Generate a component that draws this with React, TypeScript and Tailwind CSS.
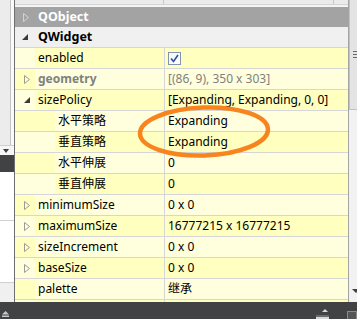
import React from "react";

type Row = {
  name: string;
  value?: string;
  level?: number;
  tri?: "open" | "closed";
  muted?: boolean;
  check?: boolean;
};

const rows: Row[] = [
  { name: "enabled", check: true },
  { name: "geometry", value: "[(86, 9), 350 x 303]", tri: "closed", muted: true },
  { name: "sizePolicy", value: "[Expanding, Expanding, 0, 0]", tri: "open" },
  { name: "水平策略", value: "Expanding", level: 1 },
  { name: "垂直策略", value: "Expanding", level: 1 },
  { name: "水平伸展", value: "0", level: 1 },
  { name: "垂直伸展", value: "0", level: 1 },
  { name: "minimumSize", value: "0 x 0", tri: "closed" },
  { name: "maximumSize", value: "16777215 x 16777215", tri: "closed" },
  { name: "sizeIncrement", value: "0 x 0", tri: "closed" },
  { name: "baseSize", value: "0 x 0", tri: "closed" },
  { name: "palette", value: "继承" },
];

const DARK = "bg-[#ffffbf]";
const LIGHT = "bg-[#ffffdd]";

function TriClosed({ color = "#9a9a9a" }: { color?: string }) {
  return (
    <svg width="6" height="9" viewBox="0 0 6 9" className="block">
      <polygon points="0.5,0.5 5.5,4.5 0.5,8.5" fill="none" stroke={color} strokeWidth="1" />
    </svg>
  );
}

function TriOpen() {
  return (
    <svg width="6" height="6" viewBox="0 0 6 6" className="block">
      <polygon points="6,0 6,6 0,6" fill="#3a3a3a" />
    </svg>
  );
}

function Check() {
  return (
    <div className="w-[13px] h-[13px] border border-[#8394b0] bg-gradient-to-br from-[#f4f6fa] to-white flex items-center justify-center">
      <svg width="9" height="9" viewBox="0 0 9 9">
        <path d="M1 4.5 L3.5 7.5 L8 1" fill="none" stroke="#2a4f9f" strokeWidth="1.6" />
      </svg>
    </div>
  );
}

function PropRow({ row, idx }: { row: Row; idx: number }) {
  const dark = idx % 2 === 0;
  const bg = dark ? DARK : LIGHT;
  const alt = dark ? LIGHT : DARK;
  const sub = row.level === 1;
  return (
    <div className={`flex h-[21px] shrink-0 border-b border-[#d6d6d6] ${bg}`}>
      <div className="flex w-[149px] shrink-0">
        <div className={`${sub ? "w-[40px]" : "w-[20px]"} shrink-0 flex items-center pl-[9px] ${alt}`}>
          {row.tri === "closed" && <TriClosed />}
          {row.tri === "open" && <TriOpen />}
        </div>
        <div
          className={`pl-[3px] flex items-center whitespace-nowrap ${
            row.muted ? "font-bold text-[#808080]" : "text-black"
          }`}
        >
          {row.name}
        </div>
      </div>
      <div className="w-px shrink-0 bg-[#d6d6d6]" />
      <div className={`flex-1 flex items-center pl-[3px] whitespace-nowrap overflow-hidden ${row.muted ? "text-[#808080]" : "text-black"}`}>
        {row.check ? <Check /> : row.value}
      </div>
    </div>
  );
}

export default function App() {
  return (
    <div
      className="relative w-[357px] h-[319px] overflow-hidden flex flex-col bg-[#f0f0f0] text-[12px] leading-none"
      style={{ fontFamily: '"Noto Sans", "Noto Sans CJK SC", sans-serif' }}
    >
      <div className="flex h-[302px] shrink-0">
        {/* left strip */}
        <div className="w-[14px] shrink-0 flex flex-col">
          <div className="h-[145px] flex">
            <div className="w-[10px] bg-[#ececec]" />
            <div className="w-px bg-[#c4c4c4]" />
            <div className="flex-1 bg-[#fafafa]" />
          </div>
          <div className="h-[10px] bg-[#f6f6f6] border-t border-[#d0d0d0] flex items-center pl-[3px]">
            <svg width="6" height="4" viewBox="0 0 6 4" className="block">
              <polygon points="0,0 6,0 3,4" fill="#404040" />
            </svg>
          </div>
          <div className="h-[17px] bg-[#404244]" />
          <div className="h-[49px] bg-white border-b border-[#d0d0d0]" />
          <div className="h-[62px] bg-white border-b border-[#d0d0d0]" />
          <div className="flex-1 bg-[#f0f0f0]" />
        </div>
        <div className="w-px shrink-0 bg-[#6e6e6e]" />

        {/* property editor */}
        <div className="flex-1 flex flex-col overflow-hidden">
          <div className="h-[5px] shrink-0 flex bg-[#ebebeb] border-b border-[#d4d4d4]">
            <div className="w-[148px]" />
            <div className="w-px bg-[#c8c8c8]" />
            <div className="w-[169px]" />
            <div className="w-px bg-[#c8c8c8]" />
          </div>
          <div className="h-[2px] shrink-0 bg-[#f4f4f4]" />
          <div className="h-[20px] shrink-0 flex items-center bg-[#a3a3a3]">
            <div className="w-[20px] shrink-0 pl-[8px] flex items-center">
              <TriClosed color="#d4d4d4" />
            </div>
            <div className="pl-[3px] font-bold text-white text-[12.5px]">QObject</div>
          </div>
          <div className="h-[21px] shrink-0 flex items-center bg-[#f0f0f0] border-b border-[#d6d6d6]">
            <div className="w-[20px] shrink-0 pl-[7px] flex items-center">
              <TriOpen />
            </div>
            <div className="pl-[3px] font-bold text-black text-[12.5px]">QWidget</div>
          </div>
          {rows.map((r, i) => (
            <PropRow key={r.name} row={r} idx={i} />
          ))}
          <div className={`h-[21px] shrink-0 flex ${DARK}`}>
            <div className={`w-[20px] ${LIGHT}`} />
            <div className="w-[129px]" />
            <div className="w-px bg-[#d6d6d6]" />
          </div>
        </div>

        {/* scrollbar */}
        <div className="w-[9px] shrink-0 flex flex-col border-l border-[#a4a4a4] bg-[#f2f2f2]">
          <div className="h-[110px] shrink-0 bg-[#e4e4e4] border-l border-[#c2c2c2] border-b flex items-center pl-[3px]">
            <div className="flex flex-col gap-[2px] w-full">
              <div className="h-px bg-[#6a6a6a]" />
              <div className="h-px bg-[#6a6a6a]" />
              <div className="h-px bg-[#6a6a6a]" />
            </div>
          </div>
          <div className="flex-1" />
          <div className="h-[14px] shrink-0 pl-[3px] pt-[1px]">
            <svg width="8" height="4" viewBox="0 0 8 4" className="block">
              <polygon points="0,0 8,0 4,4" fill="#404040" />
            </svg>
          </div>
        </div>
      </div>

      {/* bottom dark bar */}
      <div className="flex-1 bg-[#404244] flex items-start relative">
        <div className="pl-[2px] pt-[9px]">
          <svg width="7" height="6" viewBox="0 0 7 6" className="block">
            <polygon points="3.5,0 7,3.5 0,3.5" fill="#c8c8c8" />
            <rect x="0" y="4.5" width="7" height="1.5" fill="#c8c8c8" />
          </svg>
        </div>
        <div className="flex-1" />
        <div className="flex flex-col items-end pt-[7px] mr-[18px]">
          <svg width="6" height="3" viewBox="0 0 6 3" className="block mr-[1px]">
            <polygon points="3,0 6,3 0,3" fill="#d8d8d8" />
          </svg>
          <div className="mt-[3px] w-[13px] h-[6px] bg-[#d8d8d8] border-t-2 border-[#6a6a6a]" />
        </div>
        <div className="mt-[9px] w-[10px] h-[10px] bg-[#555] border border-[#8a8a8a]" />
      </div>

      {/* annotation ellipse */}
      <svg className="absolute left-0 top-0 pointer-events-none" width="357" height="319" viewBox="0 0 357 319">
        <ellipse
          cx="204"
          cy="131.5"
          rx="64"
          ry="24"
          fill="none"
          stroke="#f7841f"
          strokeWidth="4.5"
          transform="rotate(-2 204 131.5)"
        />
      </svg>
    </div>
  );
}
